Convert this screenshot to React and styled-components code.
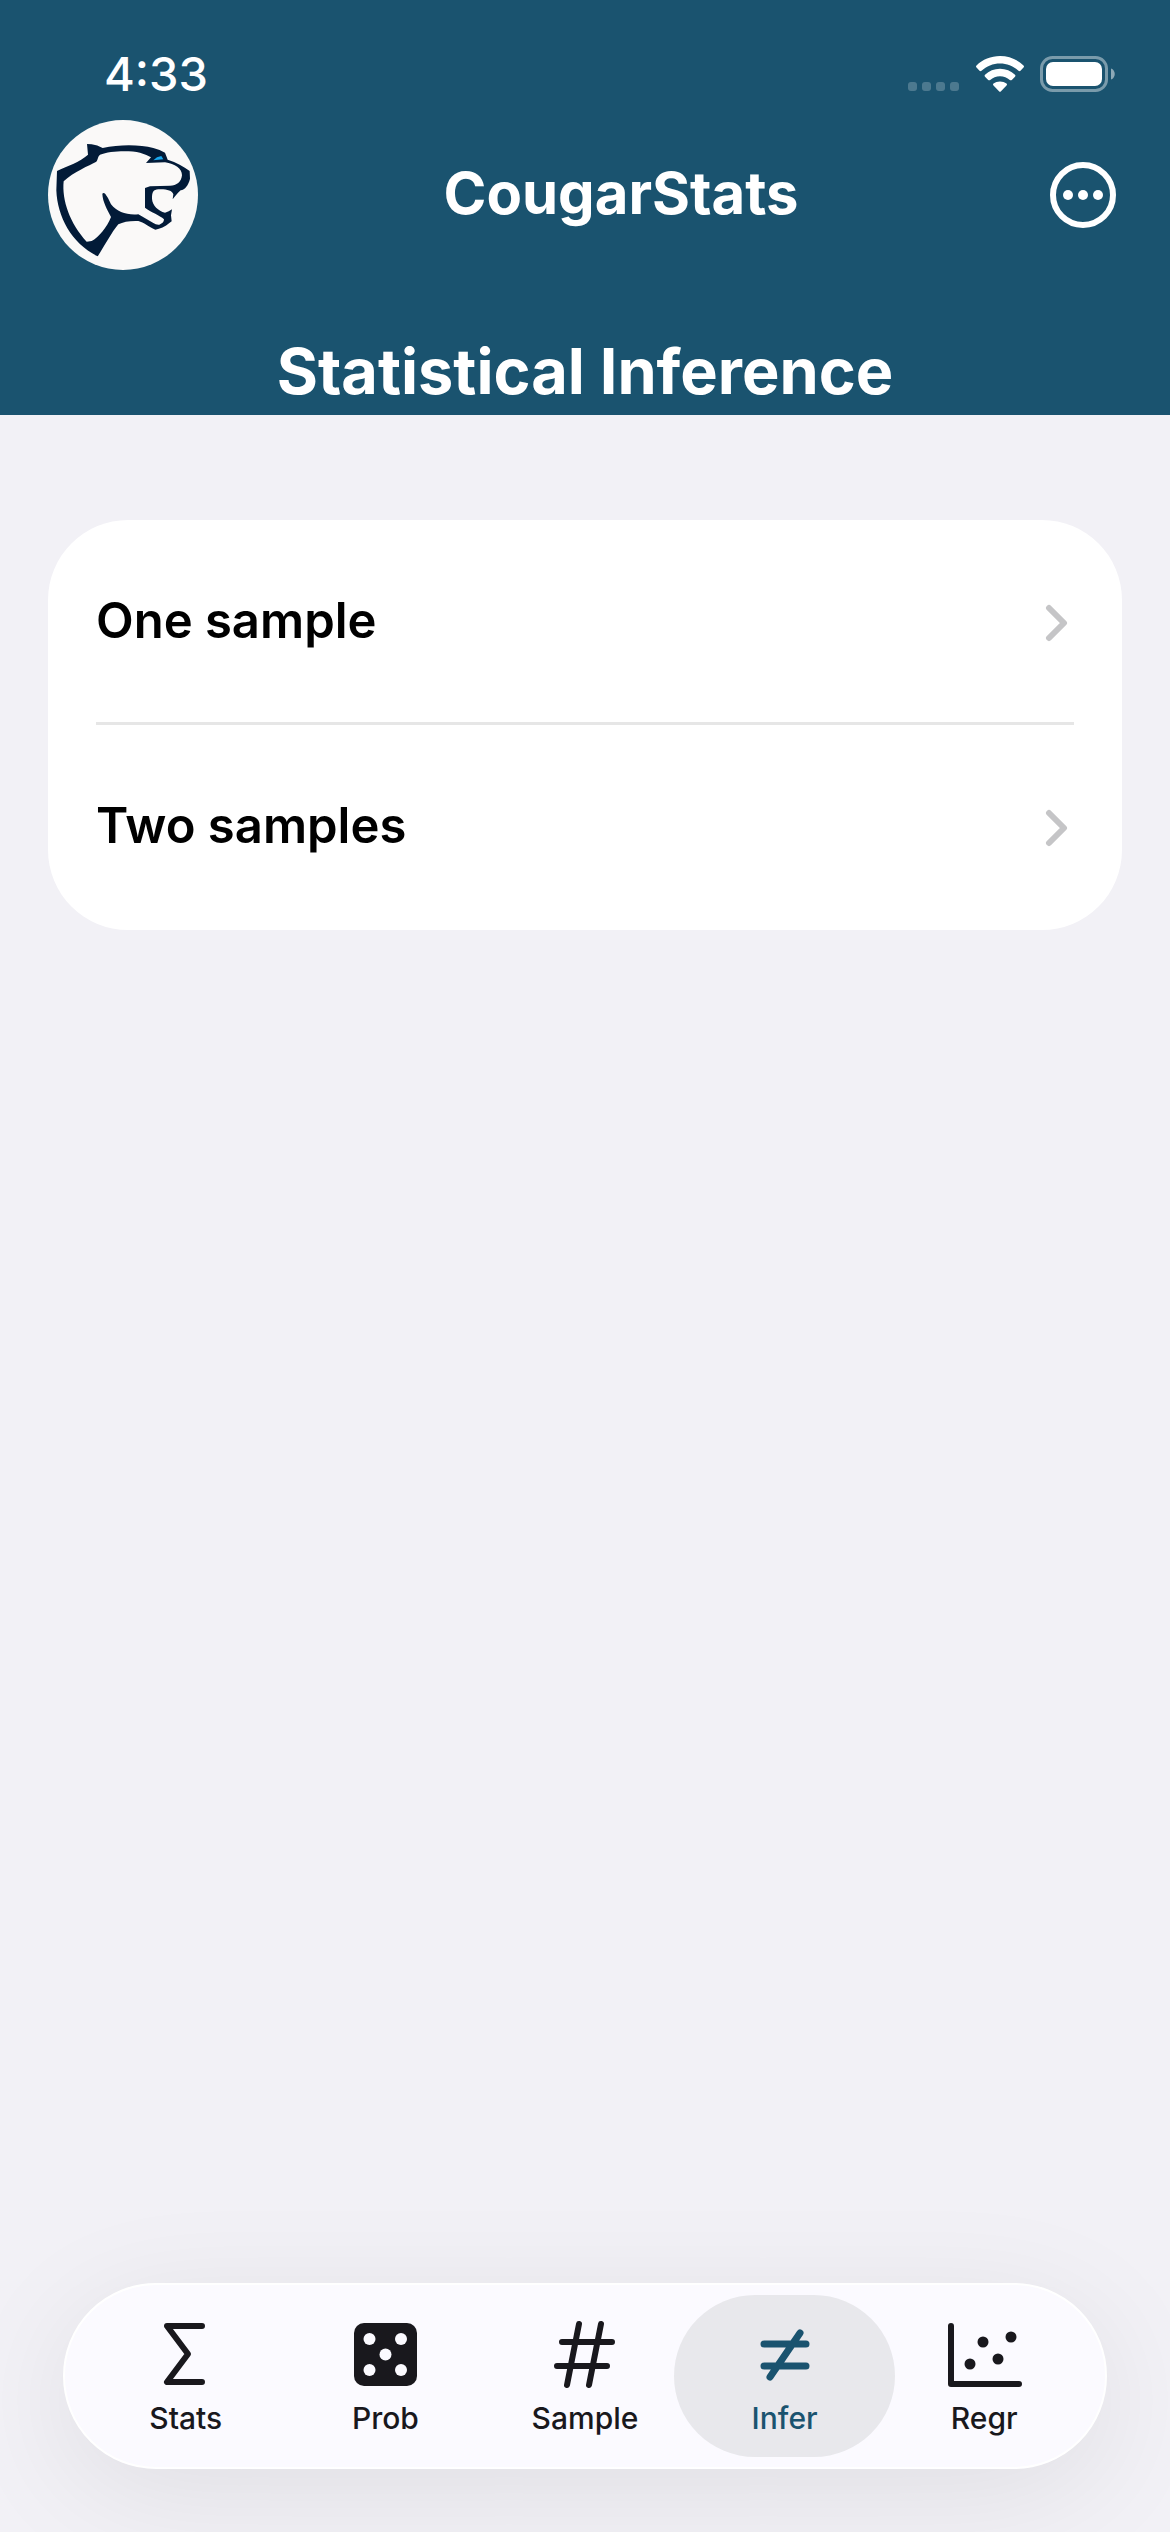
import React, { useState } from 'react';
import styled, { createGlobalStyle } from 'styled-components';

const GlobalStyle = createGlobalStyle`
  * {
    box-sizing: border-box;
  }

  body {
    margin: 0;
    background: #f2f1f6;
    font-family: Inter, 'Liberation Sans', sans-serif;
  }

  button {
    font: inherit;
    color: inherit;
    background: none;
    border: none;
    padding: 0;
    cursor: pointer;
  }

  svg {
    display: block;
  }
`;

const Screen = styled.div`
  min-height: 100vh;
  display: flex;
  flex-direction: column;
`;

const Header = styled.header`
  background: #1a536f;
  color: #ffffff;
`;

const StatusBar = styled.div`
  display: flex;
  align-items: center;
  justify-content: space-between;
  height: 120px;
  padding: 28px 54px 0 104px;
`;

const Time = styled.time`
  font-size: 47px;
  line-height: 56px;
  font-weight: 500;
`;

const StatusIcons = styled.div`
  display: flex;
  align-items: center;
  gap: 16px;
`;

const NavBar = styled.div`
  display: flex;
  align-items: center;
  justify-content: space-between;
  padding: 0 48px;
`;

const AppName = styled.h1`
  margin: 0;
  padding-bottom: 4px;
  font-size: 58px;
  line-height: 72px;
  font-weight: 700;
`;

const MenuButton = styled.button`
  padding: 6px;
`;

const PageTitle = styled.h2`
  margin: 0;
  padding: 61px 48px 4px;
  font-size: 63px;
  line-height: 80px;
  font-weight: 700;
  text-align: center;
`;

const Main = styled.main`
  flex: 1;
  padding: 105px 48px;
`;

const Card = styled.ul`
  list-style: none;
  margin: 0;
  padding: 0 48px 3px;
  background: #ffffff;
  border-radius: 80px;
`;

const CardItem = styled.li`
  & + & {
    border-top: 3px solid #e6e6e6;
  }
`;

const RowButton = styled.button`
  display: flex;
  align-items: center;
  justify-content: space-between;
  width: 100%;
  padding: 71px 6px 71px 0;
  color: #000000;
  font-size: 49px;
  line-height: 60px;
  font-weight: 600;
  text-align: left;
`;

const TabBar = styled.nav`
  display: grid;
  grid-template-columns: repeat(5, 1fr);
  margin: 0 63px 63px;
  padding: 10px 21px;
  background: #fbfaff;
  border: 2px solid #ffffff;
  border-radius: 93px;
  box-shadow: 0 24px 120px rgba(0, 0, 0, 0.08);
`;

const TabButton = styled.button`
  position: relative;
  display: flex;
  flex-direction: column;
  align-items: center;
  gap: 10px;
  padding: 23px 0 21px;
  color: ${({ $active }) => ($active ? '#1a536f' : '#19181d')};

  &::before {
    content: '';
    position: absolute;
    inset: 0 -11px;
    border-radius: 81px;
    background: ${({ $active }) => ($active ? '#e8e8ec' : 'transparent')};
  }
`;

const TabIcon = styled.svg`
  position: relative;
  width: 78px;
  height: 72px;
  fill: none;
  stroke: currentColor;
  stroke-width: 6;
  stroke-linecap: round;
  stroke-linejoin: round;
`;

const TabLabel = styled.span`
  position: relative;
  font-size: 30px;
  line-height: 36px;
  font-weight: 500;
`;

const Signal = () => (
  <svg width="52" height="36" viewBox="0 0 52 36" fill="#fff" opacity="0.22">
    {[0, 14, 28, 42].map((x) => (
      <rect key={x} x={x} y="26" width="9" height="9" rx="3" />
    ))}
  </svg>
);

const Wifi = () => (
  <svg width="48" height="36" viewBox="0 0 48 36" fill="#fff">
    <path d="M24 0C33 0 41.500 3.500 47.500 9.500Q48.500 10.500 47.500 11.500L44.500 14.800Q43.500 15.700 42.500 14.800C37.500 10.200 31 7.500 24 7.500S10.500 10.200 5.500 14.800Q4.500 15.700 3.500 14.800L.5 11.500Q-.5 10.500.5 9.500C6.500 3.500 15 0 24 0Z" />
    <path d="M24 12.800C29.800 12.800 35 15 39 18.700Q40 19.700 39 20.700L35.800 23.900Q34.800 24.800 33.800 23.900C31.200 21.600 27.800 20.200 24 20.200S16.800 21.600 14.200 23.900Q13.200 24.800 12.200 23.900L9 20.700Q8 19.700 9 18.700C13 15 18.200 12.800 24 12.800Z" />
    <path d="M24 25.400C26.500 25.400 28.700 26.200 30.500 27.600Q31.500 28.500 30.500 29.500L25 35.200Q24 36.200 23 35.200L17.500 29.500Q16.500 28.500 17.500 27.600C19.300 26.200 21.500 25.400 24 25.400Z" />
  </svg>
);

const Battery = () => (
  <svg width="76" height="36" viewBox="0 0 76 36" fill="#fff">
    <rect x="1.500" y="1.500" width="65" height="33" rx="11" fill="none" stroke="#fff" strokeWidth="3" opacity="0.42" />
    <rect x="6" y="6" width="56" height="24" rx="7" />
    <path d="M71 12.500C76 14 76 22 71 23.500Z" opacity="0.5" />
  </svg>
);

const CougarLogo = () => (
  <svg width="150" height="150" viewBox="54 59 450 450" role="img" aria-label="Cougar">
    <circle cx="279" cy="284" r="225" fill="#faf9f8" />
    <path
      fill="#021b38"
      d="M171 131L185 132Q202 134 218 143C270 132 330 133 370 143Q390 148 405 157L410 170L413 178C440 186 460 198 479 212L480 235C475 255 465 268 452 270C443 278 436 287 428 297L430 282C426 270 410 266 385 267C370 268 366 275 366 295C367 315 385 332 405 337Q417 334 426 327L423 345L425 363L419 367C405 380 390 385 376 388C355 380 342 366 325 362C300 361 280 364 265 372C245 395 222 440 203 468C125 430 82 350 79 270L81 212C110 198 150 185 174 163Z"
    />
    <path
      fill="#faf9f8"
      d="M101 243C130 215 180 195 196 186C205 181 201 171 210 163C240 151 300 150 330 157Q350 163 363 171L348 188L405 186C435 190 456 205 456 225C454 245 440 256 420 256L360 258L345 263L345 322C360 335 390 344 402 357Q402 368 388 373Q378 374 370 368L325 342C290 345 262 335 243 312Q235 292 226 281Q221 276 217 280C218 305 232 328 243 350C232 380 205 412 185 422L170 424C120 370 95 300 101 243Z"
    />
    <path fill="#18a8f0" d="M370 180L381 171L394 167L400 177Z" />
  </svg>
);

const MoreIcon = () => (
  <svg width="66" height="66" viewBox="0 0 66 66" fill="#fff">
    <circle cx="33" cy="33" r="30" fill="none" stroke="#fff" strokeWidth="6" />
    <circle cx="18" cy="33" r="5" />
    <circle cx="33" cy="33" r="5" />
    <circle cx="48" cy="33" r="5" />
  </svg>
);

const Chevron = () => (
  <svg width="36" height="42" viewBox="0 0 36 42" fill="none" stroke="#c5c5c7" strokeWidth="6" strokeLinecap="round" strokeLinejoin="round">
    <path d="M17 8L32 23L17 38" />
  </svg>
);

const tabs = [
  { label: 'Stats', icon: <path d="M55 8H20L41 36L20 64H55" /> },
  {
    label: 'Prob',
    icon: (
      <g stroke="none">
        <rect x="8" y="5" width="63" height="63" rx="10" fill="currentColor" />
        <g fill="#fbfaff">
          <circle cx="23.500" cy="21" r="6" />
          <circle cx="55" cy="21" r="6" />
          <circle cx="39.500" cy="36.500" r="6" />
          <circle cx="23.500" cy="52" r="6" />
          <circle cx="55" cy="52" r="6" />
        </g>
      </g>
    ),
  },
  { label: 'Sample', icon: <path d="M33 6L21 67M55 6L43 67M16 24H66M11 48H61" /> },
  { label: 'Infer', icon: <path d="M18 26H60M18 48H60M54 15L24 59" strokeWidth="7" /> },
  {
    label: 'Regr',
    icon: (
      <>
        <path d="M6 8V66H74" />
        <g fill="currentColor" stroke="none">
          <circle cx="25" cy="46" r="5.500" />
          <circle cx="38" cy="24" r="5.500" />
          <circle cx="53" cy="41" r="5.500" />
          <circle cx="66" cy="19" r="5.500" />
        </g>
      </>
    ),
  },
];

const samples = ['One sample', 'Two samples'];

const App = () => {
  const [active, setActive] = useState('Infer');

  return (
    <Screen>
      <GlobalStyle />
      <Header>
        <StatusBar>
          <Time>4:33</Time>
          <StatusIcons>
            <Signal />
            <Wifi />
            <Battery />
          </StatusIcons>
        </StatusBar>
        <NavBar>
          <CougarLogo />
          <AppName>CougarStats</AppName>
          <MenuButton type="button" aria-label="More options">
            <MoreIcon />
          </MenuButton>
        </NavBar>
        <PageTitle>Statistical Inference</PageTitle>
      </Header>

      <Main>
        <Card>
          {samples.map((name) => (
            <CardItem key={name}>
              <RowButton type="button">
                {name}
                <Chevron />
              </RowButton>
            </CardItem>
          ))}
        </Card>
      </Main>

      <TabBar aria-label="Sections">
        {tabs.map(({ label, icon }) => (
          <TabButton
            key={label}
            type="button"
            $active={label === active}
            aria-current={label === active ? 'page' : undefined}
            onClick={() => setActive(label)}
          >
            <TabIcon viewBox="0 0 78 72" aria-hidden="true">{icon}</TabIcon>
            <TabLabel>{label}</TabLabel>
          </TabButton>
        ))}
      </TabBar>
    </Screen>
  );
};

export default App;
